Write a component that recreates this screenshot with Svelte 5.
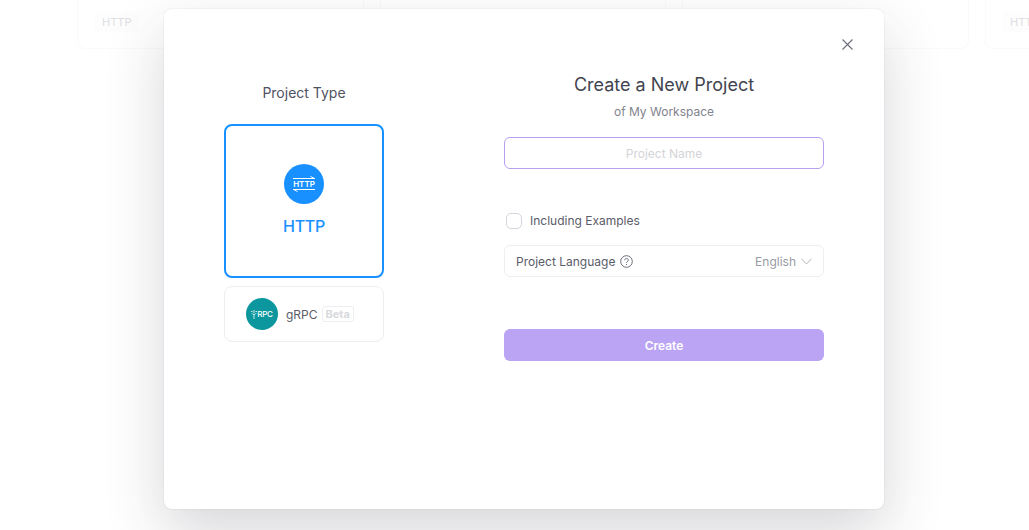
<script>
	let projectName = $state('');
	let examples = $state(false);
	const behind = [0, 1, 2, 3];
</script>

<div class="page">
	<div class="behind">
		{#each behind as i}
			<div class="tile"><span class:hidden={i === 1 || i === 2}>HTTP</span></div>
		{/each}
	</div>

	<div class="overlay">
		<div class="modal">
			<button class="close" aria-label="Close">
				<svg width="11" height="11" viewBox="0 0 11 11" fill="none" stroke="currentColor" stroke-width="1.1">
					<path d="M0.5 0.5 10.5 10.5M10.5 0.5 0.5 10.5" />
				</svg>
			</button>

			<section class="types">
				<h3>Project Type</h3>
				<div class="type active">
					<span class="badge http">
						<svg width="24" height="20" viewBox="0 0 24 20" fill="none" stroke="#fff" stroke-width="1">
							<path d="M1 4.5h22M18.5 2.5l4 2" />
							<path d="M1 15.5h22M5.5 17.5l-4-2" />
						</svg>
						<b>HTTP</b>
					</span>
					<strong>HTTP</strong>
				</div>
				<div class="type small">
					<span class="badge grpc">
						<svg width="6" height="9" viewBox="0 0 6 9" fill="none" stroke="#fff" stroke-width="0.8">
							<path d="M0 1.5h1.5M4.5 1.5h1.5M0.8 3.2c.6 1.7 3.8 1.7 4.4 0M3 0v3M3 5v4" />
						</svg>
						<b>RPC</b>
					</span>
					<span class="name">gRPC</span>
					<span class="beta">Beta</span>
				</div>
			</section>

			<section class="form">
				<h2>Create a New Project</h2>
				<p class="sub">of My Workspace</p>
				<input class="project" placeholder="Project Name" bind:value={projectName} />

				<label class="examples">
					<input type="checkbox" bind:checked={examples} />
					<span>Including Examples</span>
				</label>

				<div class="lang">
					<span class="lang-label">Project Language</span>
					<svg class="help" width="13" height="13" viewBox="0 0 13 13" fill="none" stroke="currentColor" stroke-width="1">
						<circle cx="6.5" cy="6.5" r="5.8" />
						<path d="M4.7 5.2c0-2.3 3.7-2.3 3.7-.1 0 1.3-1.9 1.3-1.9 2.8" />
						<path d="M6.5 9v1" />
					</svg>
					<span class="lang-value">English</span>
					<svg class="chev" width="11" height="7" viewBox="0 0 11 7" fill="none" stroke="currentColor" stroke-width="1">
						<path d="M0.5 0.8 5.5 6 10.5 0.8" />
					</svg>
				</div>

				<button class="create">Create</button>
			</section>
		</div>
	</div>
</div>

<style>
	:global(body) {
		margin: 0;
		background: #fff;
		font-family: Inter, "Noto Sans", sans-serif;
	}

	.page {
		position: relative;
		width: 1029px;
		height: 530px;
		overflow: hidden;
	}

	.behind {
		display: flex;
		gap: 16px;
		margin-left: 77px;
		margin-top: -100px;
	}

	.tile {
		flex: 0 0 286.67px;
		box-sizing: border-box;
		height: 149px;
		padding: 111px 24px 0;
		border: 1px solid #fafafb;
		border-radius: 8px;
		font-size: 11px;
		line-height: 20px;
		color: #dfe0e3;
	}

	.tile span {
		display: inline-block;
		margin-left: -7px;
		padding: 0 7px;
		background: #fdfdfd;
	}

	.tile .hidden {
		visibility: hidden;
	}

	.overlay {
		position: absolute;
		inset: 0;
		padding: 9px 0 0 164px;
	}

	.modal {
		position: relative;
		width: 720px;
		box-sizing: border-box;
		height: 500px;
		display: flex;
		gap: 120px;
		padding: 0 60px;
		background: #fff;
		border-radius: 8px;
		box-shadow: 0 0 2px rgba(40, 44, 60, 0.12), 0 24px 60px rgba(40, 44, 60, 0.19);
	}

	.close {
		position: absolute;
		top: 30px;
		right: 31px;
		display: flex;
		padding: 0;
		border: 0;
		background: none;
		color: #6b6d7a;
	}

	.types {
		flex: 0 0 160px;
		display: flex;
		flex-direction: column;
	}

	h3 {
		margin: 73px 0 20px;
		font-size: 14px;
		line-height: 22px;
		font-weight: 400;
		text-align: center;
		color: #50525f;
	}

	.type {
		box-sizing: border-box;
		border: 1px solid #eceef1;
		border-radius: 8px;
		display: flex;
		align-items: center;
	}

	.active {
		height: 154px;
		margin-bottom: 8px;
		flex-direction: column;
		justify-content: center;
		border: 2px solid #1890ff;
	}

	.active strong {
		margin-top: 10px;
		font-size: 16px;
		line-height: 24px;
		font-weight: 500;
		letter-spacing: -0.3px;
		color: #1890ff;
	}

	.small {
		height: 56px;
		padding-left: 21px;
	}

	.badge {
		position: relative;
		display: flex;
		align-items: center;
		justify-content: center;
		border-radius: 50%;
		color: #fff;
	}

	.http {
		width: 40px;
		height: 40px;
		background: #1890ff;
	}

	.http svg {
		position: absolute;
		left: 8px;
		top: 10px;
	}

	.http b {
		position: relative;
		font-size: 8px;
		line-height: 10px;
		font-weight: 600;
	}

	.grpc {
		width: 32px;
		height: 32px;
		gap: 0;
		background: #0b979d;
	}

	.grpc b {
		font-size: 8px;
		font-weight: 500;
		line-height: 10px;
		letter-spacing: -0.2px;
	}

	.name {
		margin-left: 8px;
		font-size: 12px;
		color: #5a5c69;
	}

	.beta {
		margin-left: 4px;
		padding: 0 3px;
		height: 16px;
		box-sizing: border-box;
		border: 1px solid #eceef1;
		border-radius: 3px;
		font-size: 11px;
		line-height: 14px;
		font-weight: 700;
		color: #d9dadd;
	}

	.form {
		flex: 0 0 320px;
		display: flex;
		flex-direction: column;
		align-items: stretch;
	}

	h2 {
		margin: 62px 0 0;
		font-size: 18px;
		line-height: 28px;
		font-weight: 400;
		text-align: center;
		color: #42444f;
	}

	.sub {
		margin: 3px 0 0;
		font-size: 12px;
		line-height: 20px;
		text-align: center;
		color: #82838e;
	}

	.project {
		box-sizing: border-box;
		height: 32px;
		margin-top: 15px;
		border: 1px solid #b79ff2;
		border-radius: 6px;
		outline: 0;
		font: 12px Inter, sans-serif;
		text-align: center;
		color: #42444f;
	}

	.project::placeholder {
		color: #d4d4d8;
	}

	.examples {
		display: flex;
		align-items: center;
		gap: 8px;
		margin-top: 42px;
		padding-left: 2px;
		font-size: 12px;
		line-height: 20px;
		color: #5a5c69;
	}

	.examples input {
		appearance: none;
		width: 16px;
		height: 16px;
		margin: 0;
		border: 1px solid #d3d5dc;
		border-radius: 5px;
		background: #fff;
	}

	.lang {
		box-sizing: border-box;
		height: 32px;
		margin-top: 14px;
		padding: 0 11px;
		display: flex;
		align-items: center;
		border: 1px solid #eceef1;
		border-radius: 6px;
		font-size: 12px;
		color: #5a5c69;
	}

	.help {
		margin-left: 5px;
		color: #6b6d7a;
	}

	.lang-value {
		margin-left: auto;
		color: #9a9ba4;
	}

	.chev {
		margin-left: 5px;
		color: #b4b5bc;
	}

	.create {
		height: 32px;
		margin-top: 52px;
		border: 0;
		border-radius: 6px;
		background: #baa4f3;
		font: 600 12px Inter, sans-serif;
		color: #fff;
	}
</style>
